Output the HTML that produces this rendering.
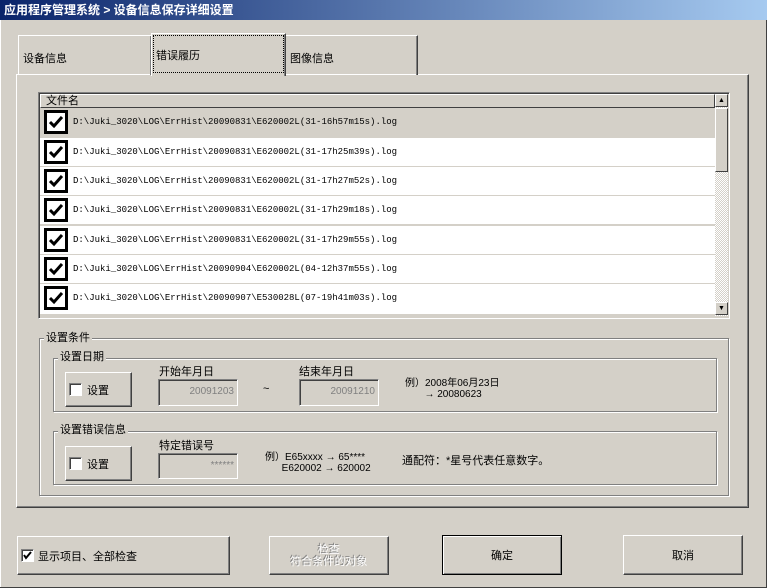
<!DOCTYPE html>
<html><head><meta charset="utf-8"><style>
*{box-sizing:border-box;margin:0;padding:0}
body{width:767px;height:588px;background:#d4d0c8;font-family:"Liberation Sans","Noto Sans CJK SC",sans-serif;font-size:11px;color:#000;position:relative;overflow:hidden}
.a{position:absolute}
.title{left:0;top:0;width:767px;height:20px;background:linear-gradient(90deg,#0a246a,#a6caf0);color:#fff;font-weight:bold;font-size:12px;line-height:20px;padding-left:4px}
.raised{border:1px solid;border-color:#fff #404040 #404040 #fff;box-shadow:inset -1px -1px 0 #808080}
.sunk{border:1px solid;border-color:#808080 #fff #fff #808080}
.btn{background:#d4d0c8;border:1px solid;border-color:#fff #404040 #404040 #fff;box-shadow:inset -1px -1px 0 #808080;display:flex;align-items:center;justify-content:center}
.etched{border:1px solid #808080;box-shadow:1px 1px 0 #fff, inset 1px 1px 0 #fff}
.leg{background:#d4d0c8;padding:0 2px;line-height:14px}
.row{left:40px;width:675px;height:29px;border-bottom:1px solid #d4d0c8;background:#fff}
.cb{left:4px;top:2px;width:24px;height:24px;border:3px solid #000;background:#fff}
.cb svg{position:absolute;left:2px;top:3px}
.ft{left:33px;top:9px;font-family:"Liberation Mono",monospace;font-size:9px}
.inp{background:#d4d0c8;border:1px solid;border-color:#808080 #fff #fff #808080;box-shadow:inset 1px 1px 0 #404040;color:#808080;font-size:10px;text-align:right;padding-right:3px;line-height:24px}
.sc{width:13px;height:13px;border:1px solid #808080;border-color:#fff #404040 #404040 #fff;background:#d4d0c8;font-size:7px;text-align:center;line-height:11px}
.chk{width:13px;height:13px;border:1px solid;border-color:#808080 #fff #fff #808080;background:#fff;box-shadow:inset 1px 1px 0 #404040}
</style></head><body>
<div class="a title">应用程序管理系统 &gt; 设备信息保存详细设置</div>
<div class="a" style="left:0;top:20px;width:1px;height:568px;background:#fff"></div>
<div class="a" style="left:766px;top:20px;width:1px;height:568px;background:#404040"></div>
<div class="a" style="left:0;top:587px;width:767px;height:1px;background:#404040"></div>
<div class="a raised" style="left:16px;top:74px;width:733px;height:434px"></div>
<div class="a raised" style="left:18px;top:35px;width:134px;height:40px;border-bottom:none;box-shadow:inset -1px 0 0 #808080"><span class="a" style="left:4px;top:14px">设备信息</span></div>
<div class="a raised" style="left:285px;top:35px;width:133px;height:40px;border-bottom:none;box-shadow:inset -1px 0 0 #808080"><span class="a" style="left:4px;top:14px">图像信息</span></div>
<div class="a raised" style="left:151px;top:33px;width:135px;height:43px;border-bottom:none;background:#d4d0c8;box-shadow:inset -1px 0 0 #808080"><div class="a" style="left:1px;top:1px;width:131px;height:38px;border:1px dotted #000"></div><span class="a" style="left:4px;top:13px">错误履历</span></div>
<div class="a sunk" style="left:38px;top:92px;width:692px;height:227px;background:#d4d0c8;box-shadow:inset 1px 1px 0 #404040"></div>
<div class="a" style="left:40px;top:94px;width:675px;height:14px;border:1px solid;border-color:#fff #404040 #404040 #fff;line-height:12px;padding-left:5px;font-size:11px">文件名</div>
<div class="a row" style="top:108px;background:#d4d0c8"><div class="a cb"><svg width="14" height="13"><path d="M1 6l4 4 8-9" stroke="#000" stroke-width="3" fill="none"/></svg></div><div class="a ft">D:\Juki_3020\LOG\ErrHist\20090831\E620002L(31-16h57m15s).log</div></div>
<div class="a row" style="top:138px"><div class="a cb"><svg width="14" height="13"><path d="M1 6l4 4 8-9" stroke="#000" stroke-width="3" fill="none"/></svg></div><div class="a ft">D:\Juki_3020\LOG\ErrHist\20090831\E620002L(31-17h25m39s).log</div></div>
<div class="a row" style="top:167px"><div class="a cb"><svg width="14" height="13"><path d="M1 6l4 4 8-9" stroke="#000" stroke-width="3" fill="none"/></svg></div><div class="a ft">D:\Juki_3020\LOG\ErrHist\20090831\E620002L(31-17h27m52s).log</div></div>
<div class="a row" style="top:196px"><div class="a cb"><svg width="14" height="13"><path d="M1 6l4 4 8-9" stroke="#000" stroke-width="3" fill="none"/></svg></div><div class="a ft">D:\Juki_3020\LOG\ErrHist\20090831\E620002L(31-17h29m18s).log</div></div>
<div class="a row" style="top:226px"><div class="a cb"><svg width="14" height="13"><path d="M1 6l4 4 8-9" stroke="#000" stroke-width="3" fill="none"/></svg></div><div class="a ft">D:\Juki_3020\LOG\ErrHist\20090831\E620002L(31-17h29m55s).log</div></div>
<div class="a row" style="top:255px"><div class="a cb"><svg width="14" height="13"><path d="M1 6l4 4 8-9" stroke="#000" stroke-width="3" fill="none"/></svg></div><div class="a ft">D:\Juki_3020\LOG\ErrHist\20090904\E620002L(04-12h37m55s).log</div></div>
<div class="a row" style="top:284px;height:31px"><div class="a cb"><svg width="14" height="13"><path d="M1 6l4 4 8-9" stroke="#000" stroke-width="3" fill="none"/></svg></div><div class="a ft">D:\Juki_3020\LOG\ErrHist\20090907\E530028L(07-19h41m03s).log</div></div>
<div class="a" style="left:715px;top:94px;width:13px;height:222px;background:repeating-conic-gradient(#fff 0 25%,#d4d0c8 0 50%) 0 0/2px 2px"></div>
<div class="a sc" style="left:715px;top:94px">▲</div>
<div class="a sc" style="left:715px;top:108px;height:64px"></div>
<div class="a sc" style="left:715px;top:302px">▼</div>
<div class="a etched" style="left:39px;top:338px;width:690px;height:158px"></div>
<div class="a leg" style="left:44px;top:331px">设置条件</div>
<div class="a etched" style="left:53px;top:358px;width:664px;height:54px"></div>
<div class="a leg" style="left:58px;top:350px">设置日期</div>
<div class="a btn" style="left:65px;top:372px;width:67px;height:35px;justify-content:flex-start;padding-left:3px"><div class="chk"></div><span style="margin-left:5px">设置</span></div>
<div class="a" style="left:159px;top:363px">开始年月日</div>
<div class="a inp" style="left:158px;top:379px;width:80px;height:27px">20091203</div>
<div class="a" style="left:263px;top:383px">~</div>
<div class="a" style="left:299px;top:363px">结束年月日</div>
<div class="a inp" style="left:299px;top:379px;width:80px;height:27px">20091210</div>
<div class="a" style="left:405px;top:378px;font-size:10px;line-height:11px">例）2008年06月23日<br>&nbsp;&nbsp;&nbsp;&nbsp;&nbsp;&nbsp;&nbsp;→ 20080623</div>
<div class="a etched" style="left:53px;top:431px;width:664px;height:54px"></div>
<div class="a leg" style="left:58px;top:423px">设置错误信息</div>
<div class="a btn" style="left:65px;top:446px;width:67px;height:35px;justify-content:flex-start;padding-left:3px"><div class="chk"></div><span style="margin-left:5px">设置</span></div>
<div class="a" style="left:159px;top:437px">特定错误号</div>
<div class="a inp" style="left:158px;top:453px;width:80px;height:26px">******</div>
<div class="a" style="left:265px;top:452px;font-size:10px;line-height:11px">例）E65xxxx → 65****<br>&nbsp;&nbsp;&nbsp;&nbsp;&nbsp;&nbsp;E620002 → 620002</div>
<div class="a" style="left:402px;top:452px;font-size:11px">通配符：*星号代表任意数字。</div>
<div class="a btn" style="left:17px;top:536px;width:213px;height:39px;justify-content:flex-start;padding-left:3px"><div class="chk" style="position:relative"><svg width="11" height="11" style="position:absolute;left:0;top:0"><path d="M2 5l2 3 5-6" stroke="#000" stroke-width="2" fill="none"/></svg></div><span style="margin-left:4px">显示项目、全部检查</span></div>
<div class="a btn" style="left:269px;top:536px;width:120px;height:39px;color:#fff;text-shadow:-1px -1px 0 #808080;text-align:center;line-height:12px;font-size:11px">检查<br>符合条件的对象</div>
<div class="a btn" style="left:442px;top:535px;width:120px;height:40px;border:1px solid #000;box-shadow:inset 1px 1px 0 #fff,inset -1px -1px 0 #808080">确定</div>
<div class="a btn" style="left:623px;top:535px;width:120px;height:40px">取消</div>
</body></html>
